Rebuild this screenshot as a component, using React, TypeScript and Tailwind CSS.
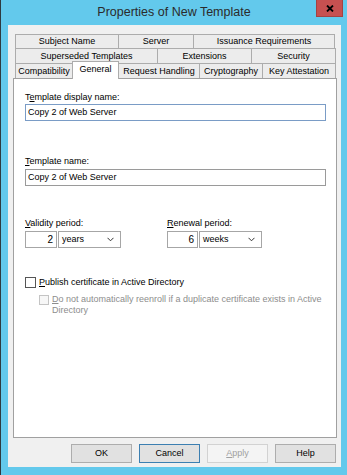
import React from "react";

const tabRows: { label: string; w: number; selected?: boolean }[][] = [
  [
    { label: "Subject Name", w: 104 },
    { label: "Server", w: 75 },
    { label: "Issuance Requirements", w: 141 },
  ],
  [
    { label: "Superseded Templates", w: 143 },
    { label: "Extensions", w: 94 },
    { label: "Security", w: 84 },
  ],
  [
    { label: "Compatibility", w: 58 },
    { label: "General", w: 46, selected: true },
    { label: "Request Handling", w: 81 },
    { label: "Cryptography", w: 63 },
    { label: "Key Attestation", w: 73 },
  ],
];

function Chevron() {
  return (
    <svg width="7" height="5" viewBox="0 0 7 5" className="shrink-0">
      <polyline points="0.5,0.8 3.5,3.8 6.5,0.8" fill="none" stroke="#333" strokeWidth="1" />
    </svg>
  );
}

function Select({ value }: { value: string }) {
  return (
    <div className="w-[63px] h-[17px] border border-[#a6a6a6] bg-white flex items-center pl-[3px] pr-[6px] justify-between">
      <span className="leading-none">{value}</span>
      <Chevron />
    </div>
  );
}

function Button({ children, kind }: { children: React.ReactNode; kind?: "focus" | "disabled" }) {
  const cls =
    kind === "focus"
      ? "border-[#3c7fb1] bg-[#e1e1e1] text-black"
      : kind === "disabled"
      ? "border-[#d2d2d2] bg-[#f4f4f4] text-[#a0a0a0]"
      : "border-[#adadad] bg-[#e1e1e1] text-black";
  return (
    <div className={`w-[61px] h-[19px] border flex items-center justify-center leading-none ${cls}`}>
      {children}
    </div>
  );
}

export default function App() {
  return (
    <div className="w-[347px] h-[475px] bg-[#63c9ec] border-l border-[#2e3a40] flex flex-col text-[9px] text-black font-['Liberation_Sans',Arial,sans-serif]">
      {/* Title bar */}
      <div className="relative h-[25px] flex items-center justify-center shrink-0">
        <span className="text-[12.5px] text-[#2b2b2b] leading-none">Properties of New Template</span>
        <div className="absolute top-0 right-[4px] w-[27px] h-[17px] bg-[#c75050] border border-[#a44242] border-t-0 flex items-center justify-center">
          <svg width="8" height="7" viewBox="0 0 8 7">
            <path d="M1 0.5 L7 6.5 M7 0.5 L1 6.5" stroke="#000" strokeWidth="1.8" />
          </svg>
        </div>
      </div>

      {/* Dialog body */}
      <div className="ml-[7px] mr-[6px] h-[442px] bg-[#f0f0f0] flex flex-col pl-[5px] pt-[9px]">
        {/* Tabs */}
        <div className="flex flex-col pl-[2px] h-[44px]">
          {tabRows.map((row, ri) => (
            <div key={ri} className={`flex ${ri === 0 ? "h-[14px]" : "h-[15px]"}`}>
              {row.map((t, ti) =>
                t.selected ? (
                  <div
                    key={t.label}
                    style={{ width: t.w + 1 }}
                    className="relative z-10 -ml-px -mt-[2px] h-[18px] bg-white border-t border-l border-r border-[#acacac] flex items-start justify-center pt-[3px] leading-none"
                  >
                    {t.label}
                  </div>
                ) : (
                  <div
                    key={t.label}
                    style={{ width: t.w }}
                    className={`h-full bg-[#ececec] border-t border-r border-[#acacac] flex items-center justify-center leading-none ${
                      ti === 0 ? "border-l" : ""
                    }`}
                  >
                    {t.label}
                  </div>
                )
              )}
            </div>
          ))}
        </div>

        {/* Panel */}
        <div className="w-[324px] h-[360px] bg-white border border-[#a0a0a0] pl-[11px] pt-[12px] flex flex-col shrink-0">
          <div className="h-[12px] leading-[12px]">
            T<span className="underline">e</span>mplate display name:
          </div>
          <div className="mt-[1px] w-[301px] h-[17px] border border-[#7a9cc6] bg-white flex items-center pl-[2px] leading-none">
            Copy 2 of Web Server
          </div>

          <div className="mt-[34px] h-[12px] leading-[12px]">
            <span className="underline">T</span>emplate name:
          </div>
          <div className="mt-[2px] w-[301px] h-[17px] border border-[#9a9a9a] bg-white flex items-center pl-[2px] leading-none">
            Copy 2 of Web Server
          </div>

          <div className="mt-[31px] flex">
            <div className="w-[142px] flex flex-col">
              <div className="h-[12px] leading-[12px]">
                <span className="underline">V</span>alidity period:
              </div>
              <div className="mt-[2px] flex gap-[1px]">
                <div className="w-[32px] h-[17px] border border-[#a6a6a6] bg-white flex items-center justify-end pr-[3px] leading-none text-[10px]">
                  2
                </div>
                <Select value="years" />
              </div>
            </div>
            <div className="flex flex-col">
              <div className="h-[12px] leading-[12px]">
                <span className="underline">R</span>enewal period:
              </div>
              <div className="mt-[2px] flex gap-[1px]">
                <div className="w-[31px] h-[17px] border border-[#a6a6a6] bg-white flex items-center justify-end pr-[3px] leading-none text-[10px]">
                  6
                </div>
                <Select value="weeks" />
              </div>
            </div>
          </div>

          <div className="mt-[29px] flex items-center gap-[3px]">
            <div className="w-[11px] h-[11px] border border-[#555] bg-white shrink-0" />
            <span className="leading-[11px]">
              <span className="underline">P</span>ublish certificate in Active Directory
            </span>
          </div>

          <div className="mt-[6px] pl-[14px] flex items-start gap-[3px]">
            <div className="mt-[1px] w-[10px] h-[10px] border border-[#c4c4c4] bg-[#f7f7f7] shrink-0" />
            <div className="flex flex-col text-[#8d8d8d] leading-[10.5px]">
              <div className="whitespace-nowrap">
                <span className="underline">D</span>o not automatically reenroll if a duplicate certificate exists in Active
              </div>
              <div>Directory</div>
            </div>
          </div>
        </div>

        {/* Buttons */}
        <div className="mt-[6px] w-[324px] flex justify-end gap-[7px] pr-px">
          <Button>OK</Button>
          <Button kind="focus">Cancel</Button>
          <Button kind="disabled">
            <span className="underline">A</span>pply
          </Button>
          <Button>Help</Button>
        </div>
      </div>
    </div>
  );
}
